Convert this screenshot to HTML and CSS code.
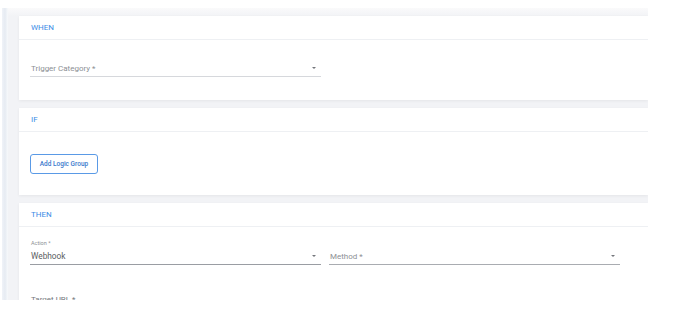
FILE: index.html
```html
<!DOCTYPE html>
<html lang="en">
<head>
  <meta charset="UTF-8">
  <title>Automation Rule</title>
  <link rel="stylesheet" href="styles.css">
</head>
<body>
  <div class="side-strip"></div>
  <div class="rule-panel">
    <div class="card">
      <div class="card-header">WHEN</div>
      <div class="card-body when-body">
        <div class="select-field wide">
          <span class="placeholder">Trigger Category *</span>
          <span class="caret"></span>
        </div>
      </div>
    </div>

    <div class="card">
      <div class="card-header">IF</div>
      <div class="card-body if-body">
        <button class="outline-btn">Add Logic Group</button>
      </div>
    </div>

    <div class="card">
      <div class="card-header">THEN</div>
      <div class="card-body then-body">
        <div class="field-row">
          <div class="select-field wide filled">
            <span class="small-label">Action *</span>
            <span class="value">Webhook</span>
            <span class="caret"></span>
          </div>
          <div class="select-field method">
            <span class="placeholder">Method *</span>
            <span class="caret"></span>
          </div>
        </div>
        <div class="text-label">Target URL *</div>
      </div>
    </div>
  </div>
</body>
</html>
```

FILE: styles.css
```css
/* layout */
body {
  margin: 0;
  font-family: Roboto, "Liberation Sans", Arial, sans-serif;
  background-color: #ffffff;
  display: flex;
  align-items: flex-start;
}
.side-strip {
  margin: 8px 0 0 2px;
  width: 6px;
  height: 292px;
  background: linear-gradient(to right, #f0f3f8, #e6ebf2 50%, #f7f9fb);
}
.rule-panel {
  margin-top: 8px;
  width: 640px;
  height: 292px;
  overflow: hidden;
  background: linear-gradient(to bottom, #fafafb, #f2f3f6 8px);
  padding: 8px 0 0 11px;
  box-sizing: border-box;
}
.card {
  background-color: #ffffff;
  box-shadow: 0 1px 3px rgba(0, 0, 0, 0.06);
  margin-bottom: 8px;
}
.card-header {
  height: 23px;
  line-height: 23px;
  padding-left: 12px;
  font-size: 8px;
  color: #3b8ce6;
  border-bottom: 1px solid #eef0f3;
}
.card-body {
  padding: 0 11px;
}
.when-body {
  height: 60px;
  padding-top: 17px;
  box-sizing: border-box;
}
.if-body {
  height: 63px;
  padding-top: 19px;
  box-sizing: border-box;
}
.then-body {
  padding-top: 12px;
  height: 80px;
  box-sizing: border-box;
}

/* fields */
.field-row {
  display: flex;
  gap: 8px;
}
.select-field {
  position: relative;
  height: 16px;
  border-bottom: 1px solid #d6d8dc;
  display: flex;
  align-items: flex-end;
  padding-bottom: 3px;
  box-sizing: content-box;
}
.select-field.wide {
  width: 291px;
}
.select-field.method {
  width: 291px;
  height: 22px;
  border-bottom-color: #a9acb1;
}
.select-field.filled {
  height: 22px;
  border-bottom-color: #9a9da3;
}
.placeholder {
  font-size: 8px;
  color: #8c8f94;
  padding-left: 1px;
}
.value {
  font-size: 8.3px;
  color: #5a5d62;
  padding-left: 1px;
}
.small-label {
  position: absolute;
  top: 1px;
  left: 1px;
  font-size: 5.5px;
  color: #8c8f94;
}
.caret {
  position: absolute;
  right: 5px;
  bottom: 7px;
  border-left: 2.5px solid transparent;
  border-right: 2.5px solid transparent;
  border-top: 2.5px solid #74777c;
}
.text-label {
  margin-top: 30px;
  font-size: 8px;
  color: #74777c;
  padding-left: 1px;
}

/* button */
.outline-btn {
  height: 20px;
  width: 68px;
  padding: 0;
  background-color: #ffffff;
  border: 1px solid #5a9ae6;
  border-radius: 3px;
  color: #3a78cc;
  font-family: inherit;
  font-size: 6.5px;
  font-weight: 500;
  cursor: pointer;
}
```
